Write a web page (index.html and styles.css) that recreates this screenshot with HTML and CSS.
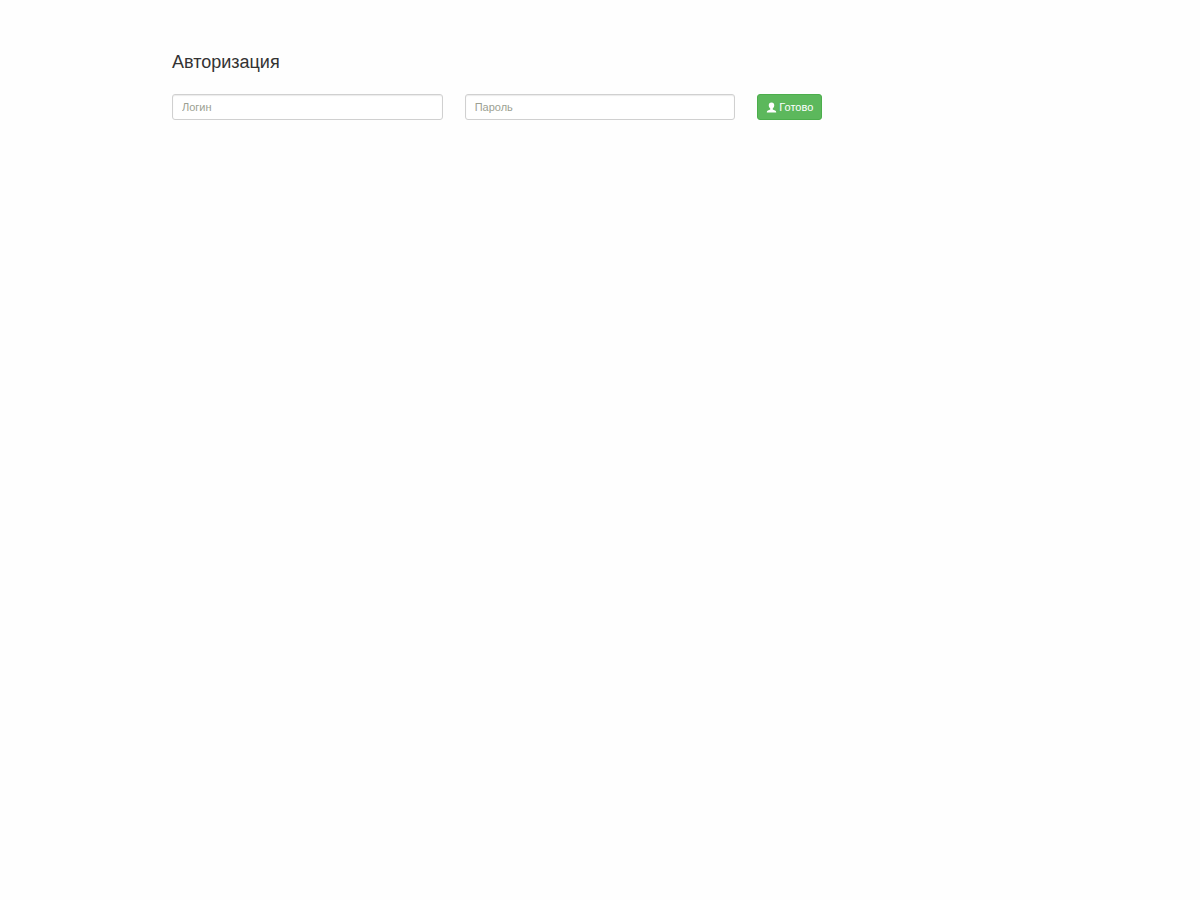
FILE: index.html
```html
<!DOCTYPE html>
<html lang="ru">
<head>
<meta charset="utf-8">
<meta name="viewport" content="width=device-width, initial-scale=1">
<title>Авторизация</title>
<link rel="stylesheet" href="styles.css">
</head>
<body>
<main class="container">
  <h1 class="title">Авторизация</h1>
  <form class="login-form">
    <input class="field" type="text" name="login" placeholder="Логин" aria-label="Логин">
    <input class="field" type="password" name="password" placeholder="Пароль" aria-label="Пароль">
    <div class="actions">
      <button class="submit" type="submit">
        <svg class="icon" viewBox="0 0 20 20" aria-hidden="true"><path d="M10 1C6.500 1 5 3.200 5 6c0 2.600 1.200 4.600 2.700 5.700v2C5 15 1.500 15.500 1.500 18v1h17v-1c0-2.500-3.500-3-6.200-4.300v-2C13.800 10.600 15 8.600 15 6 15 3.200 13.500 1 10 1z"/></svg>
        <span>Готово</span>
      </button>
    </div>
  </form>
</main>
</body>
</html>
```
FILE: styles.css
```css
* {
  box-sizing: border-box;
}

body {
  margin: 0;
  background: #fefefe;
  color: #333;
  font-family: "Liberation Sans", Arial, sans-serif;
  font-size: 11px;
}

.container {
  max-width: 878px;
  margin: 0 auto;
  padding: 52px 11px 0;
}

.title {
  margin: 0 0 21px;
  font-size: 18px;
  font-weight: 400;
  line-height: 21px;
}

.login-form {
  display: grid;
  grid-template-columns: repeat(3, 1fr);
  gap: 22px;
}

.field {
  width: 100%;
  height: 26px;
  padding: 4px 9px;
  border: 1px solid #d0d0d0;
  border-radius: 3px;
  background: #fff;
  box-shadow: inset 0 1px 1px rgba(0, 0, 0, 0.08);
  color: #555;
  font: inherit;
}

.field::placeholder {
  color: #9c9f92;
  opacity: 1;
}

.submit {
  display: flex;
  align-items: center;
  gap: 2px;
  height: 26px;
  padding: 0 8px;
  border: 1px solid #4cae4c;
  border-radius: 3px;
  background: #5cb85c;
  color: #fff;
  font: inherit;
  cursor: pointer;
}

.icon {
  width: 11px;
  height: 11px;
  fill: currentColor;
}
```
